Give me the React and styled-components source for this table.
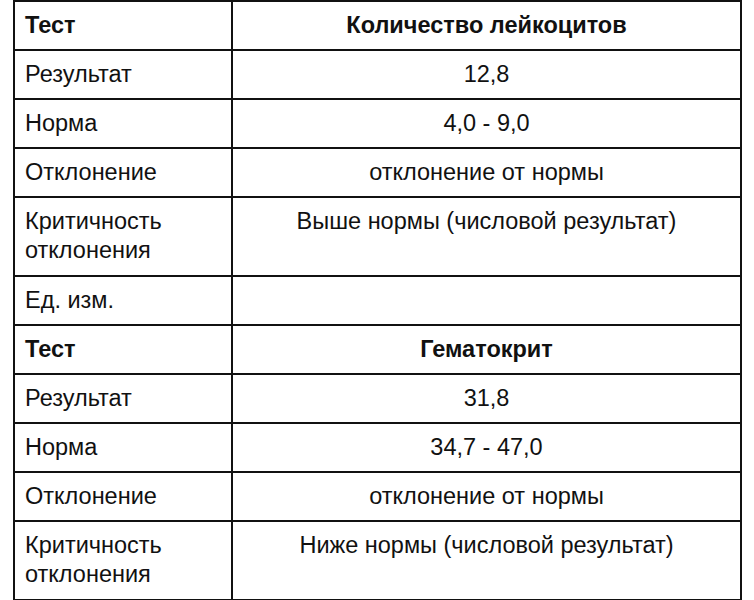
import styled, { createGlobalStyle } from "styled-components";

const GlobalStyle = createGlobalStyle`
  html, body {
    margin: 0;
    padding: 0;
    background: #ffffff;
  }
  body {
    font-family: "Liberation Sans", Arial, sans-serif;
    color: #111111;
  }
`;

const Page = styled.div`
  padding-left: 13px;
  width: 754px;
  height: 600px;
  overflow: hidden;
  box-sizing: border-box;
`;

const Table = styled.table`
  border-collapse: collapse;
  table-layout: fixed;
  width: 727px;
`;

const Cell = styled.td`
  border: 2px solid #111111;
  padding: 9px 10px ${(props) => (props.tall ? "10px" : "9px")} 10px;
  font-size: 23.5px;
  line-height: 29px;
  vertical-align: top;
  font-weight: ${(props) => (props.head ? 700 : 400)};
  text-align: ${(props) => (props.value ? "center" : "left")};
  height: 29px;
`;

const analyses = [
  {
    test: "Количество лейкоцитов",
    result: "12,8",
    norm: "4,0 - 9,0",
    deviation: "отклонение от нормы",
    critical: "Выше нормы (числовой результат)",
    unit: "",
  },
  {
    test: "Гематокрит",
    result: "31,8",
    norm: "34,7 - 47,0",
    deviation: "отклонение от нормы",
    critical: "Ниже нормы (числовой результат)",
    unit: "",
  },
];

const rowsOf = (item) => [
  { label: "Тест", val: item.test, head: true },
  { label: "Результат", val: item.result },
  { label: "Норма", val: item.norm },
  { label: "Отклонение", val: item.deviation },
  {
    label: (
      <>
        Критичность
        <br />
        отклонения
      </>
    ),
    val: item.critical,
    tall: true,
  },
  { label: "Ед. изм.", val: item.unit },
];

export default function App() {
  return (
    <>
      <GlobalStyle />
      <Page>
        <Table>
          <colgroup>
            <col style={{ width: 218 }} />
            <col style={{ width: 509 }} />
          </colgroup>
          <tbody>
            {analyses.map((item, i) =>
              rowsOf(item).map((row, j) => (
                <tr key={`${i}-${j}`}>
                  <Cell head={row.head} tall={row.tall}>
                    {row.label}
                  </Cell>
                  <Cell head={row.head} tall={row.tall} value>
                    {row.val}
                  </Cell>
                </tr>
              ))
            )}
          </tbody>
        </Table>
      </Page>
    </>
  );
}
